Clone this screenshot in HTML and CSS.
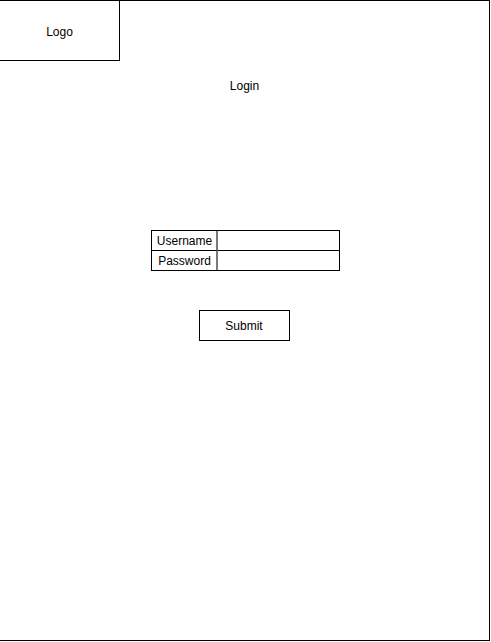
FILE: index.html
```html
<!DOCTYPE html>
<html>
<head>
<meta charset="utf-8">
<link rel="stylesheet" href="styles.css">
</head>
<body>
<div class="frame">
  <div class="logo">Logo</div>
  <div class="title">Login</div>
  <div class="form">
    <div class="label row1">Username</div>
    <div class="field row1"></div>
    <div class="label">Password</div>
    <div class="field"></div>
  </div>
  <div class="submit">Submit</div>
</div>
</body>
</html>
```
FILE: styles.css
```css
html, body {
  margin: 0;
  padding: 0;
  background: #fff;
}
body {
  font-family: "Liberation Sans", Arial, sans-serif;
  font-size: 12px;
  color: #000;
}
.frame {
  box-sizing: border-box;
  width: 490px;
  height: 641px;
  border-top: 1px solid #000;
  border-right: 1px solid #000;
  border-bottom: 1px solid #000;
  display: flex;
  flex-direction: column;
  align-items: center;
}
.logo {
  align-self: flex-start;
  box-sizing: border-box;
  width: 120px;
  height: 60px;
  padding-top: 2px;
  border-right: 1px solid #000;
  border-bottom: 1px solid #000;
  display: flex;
  align-items: center;
  justify-content: center;
}
.title {
  margin-top: 18px;
  line-height: 14px;
  height: 14px;
}
.form {
  margin-top: 137px;
  margin-left: 2px;
  display: grid;
  grid-template-columns: 66px 121px;
  grid-template-rows: 20px 19px;
  border: 1px solid #000;
}
.label {
  border-right: 2px solid #7a7a7a;
  display: flex;
  align-items: center;
  justify-content: center;
  line-height: 14px;
  padding-left: 1px;
}
.row1 {
  border-bottom: 1px solid #000;
  height: 19px;
}
.submit {
  margin-top: 39px;
  box-sizing: border-box;
  width: 91px;
  height: 31px;
  border: 1px solid #000;
  display: flex;
  align-items: center;
  justify-content: center;
  margin-left: -1px;
}
```
